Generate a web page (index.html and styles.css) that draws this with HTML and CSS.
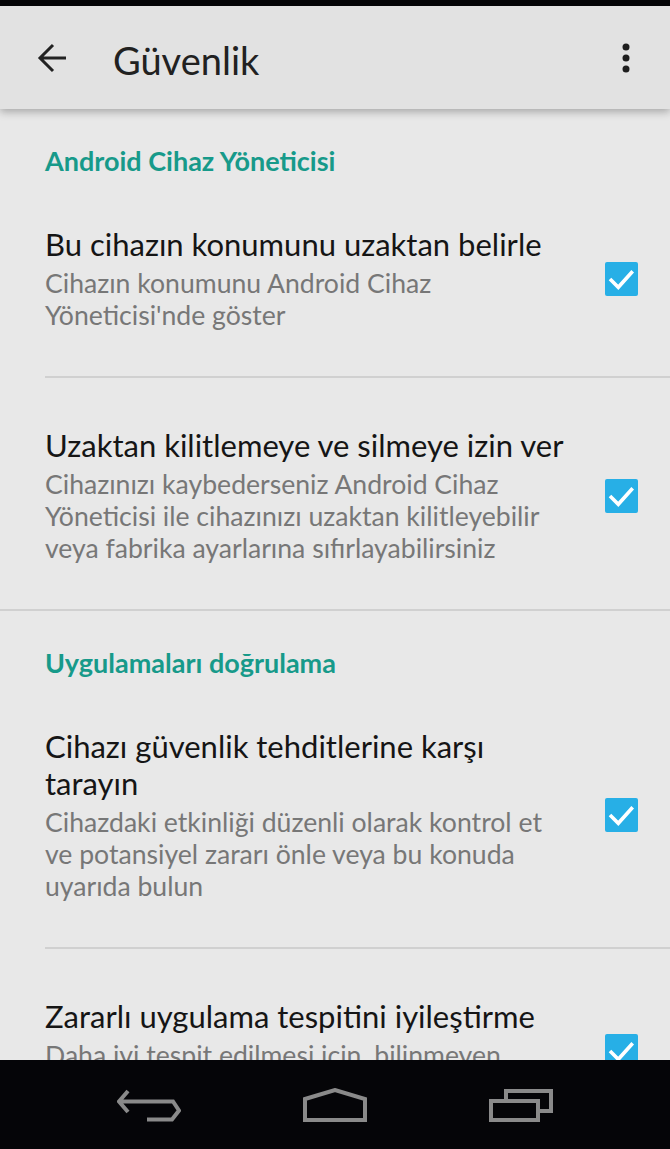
FILE: index.html
```html
<!DOCTYPE html>
<html lang="tr">
<head>
<meta charset="utf-8">
<title>Güvenlik</title>
<link rel="stylesheet" href="styles.css">
</head>
<body>
<div class="status"></div>
<header class="appbar">
  <svg class="back" width="30" height="30" viewBox="0 0 30 30"><path d="M29 15H3M16 2L3 15L16 28" fill="none" stroke="#222" stroke-width="3"/></svg>
  <h1 class="title">Güvenlik</h1>
  <svg class="more" width="8" height="30" viewBox="0 0 8 30"><circle cx="4" cy="4" r="3.5" fill="#1e1e1e"/><circle cx="4" cy="15" r="3.5" fill="#1e1e1e"/><circle cx="4" cy="26" r="3.5" fill="#1e1e1e"/></svg>
</header>
<main class="content">
  <section class="section">
    <h2 class="section-head">Android Cihaz Yöneticisi</h2>
    <div class="item">
      <div class="text">
        <div class="item-title">Bu cihazın konumunu uzaktan belirle</div>
        <div class="item-sub">Cihazın konumunu Android Cihaz Yöneticisi'nde göster</div>
      </div>
      <svg class="check" width="33" height="34" viewBox="0 0 33 34"><rect width="33" height="34" rx="2" fill="#27afe6"/><path d="M5 17L13.3 25.3L27.7 9.3" fill="none" stroke="#fff" stroke-width="3.6"/></svg>
    </div>
    <div class="divider inset"></div>
    <div class="item">
      <div class="text">
        <div class="item-title">Uzaktan kilitlemeye ve silmeye izin ver</div>
        <div class="item-sub">Cihazınızı kaybederseniz Android Cihaz Yöneticisi ile cihazınızı uzaktan kilitleyebilir veya fabrika ayarlarına sıfırlayabilirsiniz</div>
      </div>
      <svg class="check" width="33" height="34" viewBox="0 0 33 34"><rect width="33" height="34" rx="2" fill="#27afe6"/><path d="M5 17L13.3 25.3L27.7 9.3" fill="none" stroke="#fff" stroke-width="3.6"/></svg>
    </div>
  </section>
  <div class="divider"></div>
  <section class="section">
    <h2 class="section-head">Uygulamaları doğrulama</h2>
    <div class="item">
      <div class="text">
        <div class="item-title">Cihazı güvenlik tehditlerine karşı tarayın</div>
        <div class="item-sub">Cihazdaki etkinliği düzenli olarak kontrol et ve potansiyel zararı önle veya bu konuda uyarıda bulun</div>
      </div>
      <svg class="check" width="33" height="34" viewBox="0 0 33 34"><rect width="33" height="34" rx="2" fill="#27afe6"/><path d="M5 17L13.3 25.3L27.7 9.3" fill="none" stroke="#fff" stroke-width="3.6"/></svg>
    </div>
    <div class="divider inset"></div>
    <div class="item">
      <div class="text">
        <div class="item-title">Zararlı uygulama tespitini iyileştirme</div>
        <div class="item-sub">Daha iyi tespit edilmesi için, bilinmeyen uygulamaları Google'a gönder</div>
      </div>
      <svg class="check" width="33" height="34" viewBox="0 0 33 34"><rect width="33" height="34" rx="2" fill="#27afe6"/><path d="M5 17L13.3 25.3L27.7 9.3" fill="none" stroke="#fff" stroke-width="3.6"/></svg>
    </div>
  </section>
</main>
<nav class="navbar">
  <svg width="64" height="34" viewBox="0 0 64 34"><path d="M11 3L2 13.5L11 24M2 13.5H56L62 22.5L55 31.5H30" fill="none" stroke="#8a8a8a" stroke-width="4"/></svg>
  <svg width="64" height="34" viewBox="0 0 64 34"><path d="M2 11L32 2L62 11V32H2Z" fill="none" stroke="#8a8a8a" stroke-width="4"/></svg>
  <svg width="64" height="34" viewBox="0 0 64 34"><path d="M17 11V3H62V23H51" fill="none" stroke="#8a8a8a" stroke-width="4"/><rect x="2" y="13" width="47" height="19" fill="none" stroke="#8a8a8a" stroke-width="4"/></svg>
</nav>
</body>
</html>
```
FILE: styles.css
```css
html, body {
  margin: 0;
  padding: 0;
  height: 100%;
  overflow: hidden;
}
body {
  background: #e8e8e8;
  font-family: Lato, "Open Sans", sans-serif;
}
.status {
  height: 6px;
  background: #050508;
}
.appbar {
  height: 103px;
  background: #e2e2e2;
  display: flex;
  align-items: center;
  padding-left: 37px;
  padding-right: 40px;
  box-shadow: 0 3px 8px rgba(0,0,0,0.28);
  position: relative;
  z-index: 1;
}
.back { flex: none; }
.title {
  margin: 4px 0 0 46px;
  flex: 1;
  font-size: 38px;
  font-weight: 400;
  color: #212121;
  line-height: 40px;
}
.more { flex: none; }
.section-head {
  margin: 0;
  padding: 36px 45px 0;
  font-size: 27px;
  line-height: 32px;
  font-weight: 700;
  color: #179a8a;
}
.item {
  display: flex;
  align-items: center;
  padding: 49px 32px 45px 45px;
  gap: 30px;
}
.text {
  flex: 1;
  min-width: 0;
}
.item-title {
  font-size: 31px;
  line-height: 37px;
  color: #151515;
}
.item-sub {
  margin-top: 4px;
  font-size: 26.6px;
  line-height: 32px;
  color: #777;
}
.check { flex: none; }
.divider {
  height: 2px;
  background: #d0d0d0;
}
.divider.inset {
  margin-left: 45px;
}
.navbar {
  position: fixed;
  left: 0;
  right: 0;
  bottom: 0;
  height: 89px;
  background: #050508;
  display: flex;
  justify-content: center;
  align-items: center;
  gap: 122px;
  z-index: 2;
}
```
